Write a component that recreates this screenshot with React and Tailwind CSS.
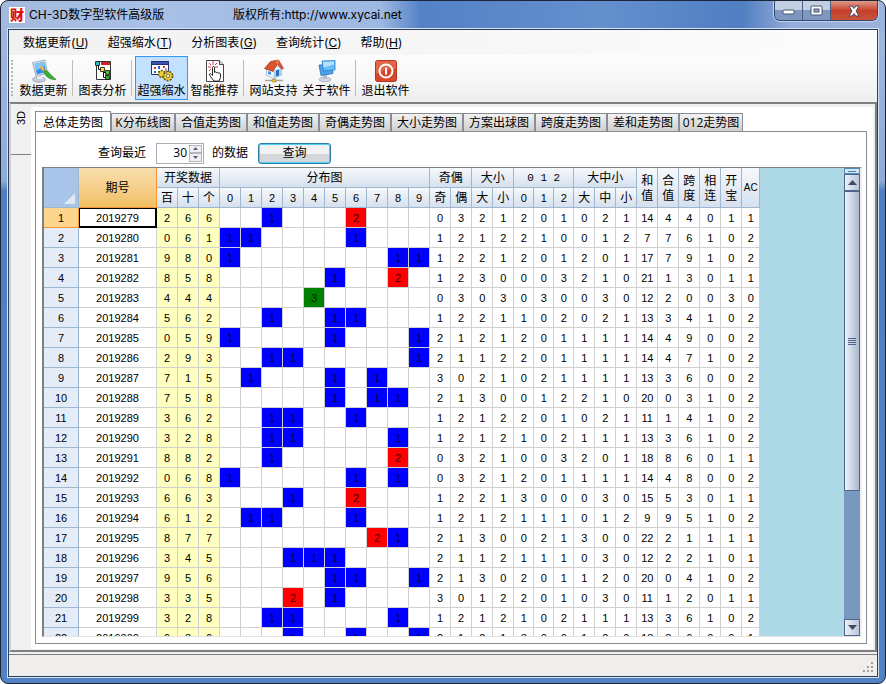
import { useState } from "react";
import clsx from "clsx";

const MENUS = [
  { label: "数据更新", hotkey: "U" },
  { label: "超强缩水", hotkey: "T" },
  { label: "分析图表", hotkey: "G" },
  { label: "查询统计", hotkey: "C" },
  { label: "帮助", hotkey: "H" },
];

const TABS = [
  "总体走势图",
  "K分布线图",
  "合值走势图",
  "和值走势图",
  "奇偶走势图",
  "大小走势图",
  "方案出球图",
  "跨度走势图",
  "差和走势图",
  "012走势图",
];

const FIRST_ISSUE = 2019279;
const DRAWS = [
  "266", "061", "980", "858", "444", "562", "059", "293", "715", "758", "362",
  "328", "882", "068", "663", "612", "877", "345", "956", "335", "328", "936",
];

const DIGITS = [0, 1, 2, 3, 4, 5, 6, 7, 8, 9];

const HIT_COLORS = {
  1: "bg-[#0000ff]",
  2: "bg-[#ff0000]",
  3: "bg-[#008000]",
};

// all the statistic columns for one draw, from 奇 to AC
function getStats(nums) {
  const count = (fn) => nums.filter(fn).length;
  const [a, b, c] = nums;
  const sum = a + b + c;
  const diffs = [Math.abs(a - b), Math.abs(b - c), Math.abs(a - c)];
  const distinct = new Set(nums).size;

  return [
    count((n) => n % 2 === 1),
    count((n) => n % 2 === 0),
    count((n) => n >= 5),
    count((n) => n < 5),
    count((n) => n % 3 === 0),
    count((n) => n % 3 === 1),
    count((n) => n % 3 === 2),
    count((n) => n >= 7),
    count((n) => n >= 3 && n <= 6),
    count((n) => n <= 2),
    sum,
    sum % 10,
    Math.max(...nums) - Math.min(...nums),
    diffs.includes(1) ? 1 : 0,
    distinct === 3 ? 0 : distinct === 2 ? 1 : 3,
    new Set(diffs).size - 1,
  ];
}

/* ICONS */

function UpdateIcon() {
  return (
    <svg width="26" height="24" viewBox="0 0 26 24">
      <ellipse cx="8" cy="20.500" rx="6.500" ry="2.800" fill="#c3cbd9" stroke="#8792a8" strokeWidth=".6" />
      <path d="M6 16l5 0 1 4-6 0z" fill="#e6ebf2" />
      <path d="M1.500 3.500l12.500-2.500 2.500 13-11.500 3.500z" fill="#d5dce8" stroke="#8a9ab5" strokeWidth=".7" />
      <path d="M3.500 5l9.500-2 2 10-9 2.500z" fill="#2f8fe6" />
      <path d="M3.500 5l9.500-2 .6 4-9 5z" fill="#7cc6fa" />
      <path d="M8 7.500l3-.5 4 5-2 1.500z" fill="#f0b640" />
      <path d="M13 11.500c2.500-.5 5 1.500 6 3.500l6 5.500c-5 .5-10-2-12-7z" fill="#3fae35" stroke="#1f7a24" strokeWidth=".6" />
    </svg>
  );
}

function ChartIcon() {
  return (
    <svg width="24" height="24" viewBox="0 0 24 24">
      <path d="M5.500 2.500h14v18h-14z" fill="#fff" stroke="#333" />
      <path d="M10 3h9v3h-9z" fill="#d3202c" />
      <path d="M7.500 6v4.500h3M12.500 11v7.500h3M13 13.500h3" fill="none" stroke="#111" />
      <path d="M4.500 2.500h4v4h-4z" fill="#39b5bd" stroke="#111" strokeWidth=".8" />
      <path d="M9.500 8.500h4v4h-4z" fill="#f1df3c" stroke="#111" strokeWidth=".8" />
      <path d="M14.500 11.500h4v4h-4z" fill="#4fbf3f" stroke="#111" strokeWidth=".8" />
      <path d="M14.500 16.500h4v4h-4z" fill="#3e9e36" stroke="#111" strokeWidth=".8" />
    </svg>
  );
}

function ShrinkIcon() {
  return (
    <svg width="26" height="24" viewBox="0 0 26 24">
      <path d="M2.500 2.500h17v13h-17z" fill="#fff" stroke="#26356e" />
      <path d="M2.500 2.500h17v3h-17z" fill="#3c55a8" stroke="#26356e" />
      <path d="M5 8h2v2h-2zM14 7h2v2h-2z" fill="#e03535" />
      <path d="M9 7h2v3h-2zM5 12h2v2h-2z" fill="#3455d8" />
      <path d="M9 12h2v2h-2z" fill="#3caa3c" />
      <circle cx="13" cy="15" r="3.500" fill="#e9cf3a" stroke="#6b5a10" strokeDasharray="2 1" strokeWidth="1.400" />
      <circle cx="19" cy="17" r="4.600" fill="#ecd23c" stroke="#6b5a10" strokeDasharray="2 1.200" strokeWidth="1.800" />
      <circle cx="19" cy="17" r="1.600" fill="#fff" stroke="#6b5a10" strokeWidth=".8" />
      <path d="M17 9v6" stroke="#8c8c8c" strokeWidth="1.500" />
    </svg>
  );
}

function RecommendIcon() {
  return (
    <svg width="24" height="24" viewBox="0 0 24 24">
      <path d="M3.500 1.500h13l4 4v17h-17z" fill="#fff" stroke="#444" />
      <path d="M16.500 1.500v4h4" fill="#ddd" stroke="#444" />
      <path d="M10 2v4M5 8h3M12 8h3M6 4l2 2M14 4l-2 2M6 12l2-2" stroke="#e23a4a" />
      <path d="M9.500 8.500c0-1.500 2-1.500 2 0v5c.5-1 2-.8 2 .3.500-.8 2-.5 2 .5.500-.6 2-.3 2 .8v3.500l-1.500 3.500h-5l-4.500-6c-.6-1.300 1-2 1.800-.8l1.200 1.200z" fill="#fff" stroke="#222" />
    </svg>
  );
}

function HomeIcon() {
  return (
    <svg width="24" height="24" viewBox="0 0 24 24">
      <path d="M4.500 10l5-5 10 4v7l-8 3.500-7-3z" fill="#f3f8fd" stroke="#7fa3cc" strokeWidth=".7" />
      <path d="M11.500 12l8-3v7l-8 3.500z" fill="#a9d0f5" />
      <path d="M2.500 9.500l6-7 8-1.500 5 8.500-2 .5-4-5-4.500 7.500z" fill="#d9542c" stroke="#a33518" strokeWidth=".7" />
      <path d="M14.500 1.500l2-.5v3l-2 1z" fill="#ee8557" />
      <path d="M14 11.500l3-1v6l-3 1z" fill="#2c6fb8" />
      <path d="M6 12l3 1v3l-3-1z" fill="#4b93dd" />
      <path d="M3 21.500h18M12 19v3" stroke="#a5a5a5" strokeWidth="1.500" />
      <path d="M10 20.500h4v2.500h-4z" fill="#ecc73a" stroke="#9a7a12" strokeWidth=".5" />
    </svg>
  );
}

function AboutIcon() {
  return (
    <svg width="24" height="24" viewBox="0 0 24 24">
      <ellipse cx="10" cy="20.500" rx="6" ry="2.300" fill="#d3d9e3" stroke="#8e9ab0" strokeWidth=".6" />
      <path d="M8 15h4v5h-4z" fill="#b6c0d0" />
      <path d="M4 6l13-.5 1 9-12 2z" fill="#4ba1ea" stroke="#2a72bd" strokeWidth=".8" />
      <path d="M7 2l13-.5v9.500l-11.500 1z" fill="#69bdf7" stroke="#2a7fce" strokeWidth=".8" />
      <path d="M8 3l11-.5v3l-10.500 3z" fill="#b4e2fd" />
    </svg>
  );
}

function ExitIcon() {
  return (
    <svg width="24" height="24" viewBox="0 0 24 24">
      <rect x="1.500" y="1.500" width="21" height="21" rx="2" fill="#d9472b" stroke="#b5351d" />
      <path d="M2 2h20v8c-7 0-13 1-20 5z" fill="#ea7a5c" opacity=".6" />
      <circle cx="12" cy="12" r="6.500" fill="none" stroke="#fff" strokeWidth="2" />
      <path d="M12 8.500v7" stroke="#fff" strokeWidth="2" />
    </svg>
  );
}

const TOOLS = [
  { label: "数据更新", Icon: UpdateIcon, line: true },
  { label: "图表分析", Icon: ChartIcon, line: true },
  { label: "超强缩水", Icon: ShrinkIcon, active: true },
  { label: "智能推荐", Icon: RecommendIcon, line: true },
  { label: "网站支持", Icon: HomeIcon },
  { label: "关于软件", Icon: AboutIcon, line: true },
  { label: "退出软件", Icon: ExitIcon },
];

function TitleBar() {
  return (
    <header className="flex h-7 shrink-0 items-start justify-between">
      <div className="flex h-7 items-center pl-px font-[Inter,'Noto_Sans_CJK_SC',sans-serif]">
        <span className="flex h-4 w-4 items-center justify-center bg-white text-[14px] leading-4 font-black text-[#e01010]">
          财
        </span>
        <h1 className="ml-1 w-[204px] text-[12px] leading-4 whitespace-nowrap">CH-3D数字型软件高级版</h1>
        <span className="text-[12px] leading-4">版权所有:http://www.xycai.net</span>
      </div>

      <div className="flex h-5 overflow-hidden rounded-b-md border border-t-0 border-[#33466b] shadow-[0_0_0_1px_#c4d3ec]">
        <button
          aria-label="最小化"
          className="flex w-7 items-center justify-center border-r border-[#4a5c80] bg-linear-to-b from-[#c3cfe3] from-50% to-[#7d97c0] to-50%"
        >
          <svg width="13" height="13" viewBox="0 0 13 13">
            <rect x="1" y="6" width="11" height="4" rx="1" fill="#fff" stroke="#4a5570" />
          </svg>
        </button>
        <button
          aria-label="最大化"
          className="flex w-7 items-center justify-center border-r border-[#4a5c80] bg-linear-to-b from-[#c3cfe3] from-50% to-[#7d97c0] to-50%"
        >
          <svg width="13" height="11" viewBox="0 0 13 11">
            <rect x="1" y="1" width="11" height="9" rx="1" fill="#fff" stroke="#4a5570" />
            <rect x="4" y="4" width="5" height="3" fill="#8fa3c6" stroke="#4a5570" />
          </svg>
        </button>
        <button
          aria-label="关闭"
          className="flex w-[46px] items-center justify-center bg-linear-to-b from-[#dd9a8c] via-[#c4402c] via-50% to-[#c9523a]"
        >
          <svg width="14" height="12" viewBox="0 0 14 12">
            <path d="M2 1h3l2 2.500 2-2.500h3l-3 5 3 5h-3l-2-2.500-2 2.500h-3l3-5z" fill="#fff" stroke="#4a4a5e" />
          </svg>
        </button>
      </div>
    </header>
  );
}

function MenuBar() {
  return (
    <nav className="flex h-[25px] shrink-0 items-center gap-[19px] bg-linear-to-r from-[#f1f1f1] to-[#fcfcfc] pl-[14px] font-[Inter,'Noto_Sans_CJK_SC',sans-serif]">
      {MENUS.map((m) => (
        <button key={m.label} className="text-[12px] leading-4">
          {m.label}(<span className="underline">{m.hotkey}</span>)
        </button>
      ))}
    </nav>
  );
}

function Toolbar() {
  return (
    <div className="flex h-[47px] shrink-0 items-start bg-linear-to-b from-[#fdfdfd] via-[#f7f7f7] to-[#eeeeee] pt-px pl-[2px]">
      <div className="mt-1 mr-1 h-9 w-0 border-l-2 border-dotted border-[#b8b8b8]" />
      {TOOLS.map(({ label, Icon, active, line }) => (
        <div key={label} className="flex items-center">
          <button
            className={clsx(
              "flex h-11 w-[53px] flex-col items-center border pt-[2px] text-[12px] leading-4",
              active ? "border-[#3399ff] bg-[#c2e0ff]" : "border-transparent"
            )}
          >
            <Icon />
            <span className="whitespace-nowrap">{label}</span>
          </button>
          {line && <div className="mr-[3px] ml-[2px] h-9 w-px bg-[#bdbdbd]" />}
        </div>
      ))}
    </div>
  );
}

function QueryRow({ value, onChange }) {
  const step = (n) => onChange(String(Math.max(1, Number(value) + n)));

  return (
    <div className="flex h-[35px] shrink-0 items-center pt-[7px] pl-14 text-[12px] leading-4">
      <label htmlFor="recent" className="mr-[10px]">查询最近</label>
      <div className="flex h-[21px] w-12 border border-[#abadb3] bg-white p-px">
        <input
          id="recent"
          value={value}
          onChange={(e) => onChange(e.target.value)}
          className="w-[29px] min-w-0 bg-transparent text-right text-[12px] leading-4 outline-none"
        />
        <div className="ml-[2px] flex flex-1 flex-col">
          <button
            aria-label="增加"
            onClick={() => step(1)}
            className="flex flex-1 items-center justify-center border border-[#b5b5b5] bg-[#f0f0f0]"
          >
            <svg width="5" height="3" viewBox="0 0 5 3"><path d="M0 3l2.500-3 2.500 3z" fill="#4a608c" /></svg>
          </button>
          <button
            aria-label="减少"
            onClick={() => step(-1)}
            className="flex flex-1 items-center justify-center border border-[#b5b5b5] bg-[#f0f0f0]"
          >
            <svg width="5" height="3" viewBox="0 0 5 3"><path d="M0 0l2.500 3 2.500-3z" fill="#4a608c" /></svg>
          </button>
        </div>
      </div>
      <span className="ml-2">的数据</span>
      <button className="ml-[10px] h-[21px] w-[73px] rounded-[3px] border border-[#2c7da8] bg-linear-to-b from-[#f2f2f2] from-50% to-[#d4d8da] to-50% shadow-[inset_0_0_0_1px_#4fd0f0]">
        查询
      </button>
    </div>
  );
}

function HeadCell({ children, className, ...rest }) {
  return (
    <th
      {...rest}
      className={clsx(
        "overflow-hidden border-r border-b border-[#9eb6ce] bg-linear-to-b from-[#f6f9fc] to-[#d6e0ee] p-0 text-center font-normal whitespace-nowrap",
        className
      )}
    >
      {children}
    </th>
  );
}

function TrendTable() {
  return (
    <table className="w-[716px] shrink-0 table-fixed border-separate border-spacing-0 self-start bg-white text-[12px] leading-4">
      <colgroup>
        <col className="w-[35px]" />
        <col className="w-[78px]" />
        <col span={17} className="w-[21px]" />
        <col span={3} className="w-[20px]" />
        <col span={8} className="w-[21px]" />
        <col className="w-[18px]" />
      </colgroup>
      <thead>
        <tr className="h-5">
          <th rowSpan={2} aria-label="全选" className="border-r border-b border-[#9eb6ce] bg-[#a9c4e9] p-0 align-bottom">
            <svg className="ml-auto" width="14" height="14" viewBox="0 0 14 14">
              <path d="M11 0v11h-11z" fill="#dfe9f6" />
            </svg>
          </th>
          <th
            rowSpan={2}
            className="border-r border-b border-[#f29536] bg-linear-to-b from-[#f9deae] to-[#f2bf62] p-0 font-normal"
          >
            期号
          </th>
          <HeadCell colSpan={3}>开奖数据</HeadCell>
          <HeadCell colSpan={10}>分布图</HeadCell>
          <HeadCell colSpan={2}>奇偶</HeadCell>
          <HeadCell colSpan={2}>大小</HeadCell>
          <HeadCell colSpan={3} className="font-['Liberation_Mono',monospace] text-[11px]">0 1 2</HeadCell>
          <HeadCell colSpan={3}>大中小</HeadCell>
          {["和值", "合值", "跨度", "相连", "开宝"].map((t) => (
            <HeadCell key={t} rowSpan={2} className="leading-[15px]">
              {t[0]}
              <br />
              {t[1]}
            </HeadCell>
          ))}
          <HeadCell rowSpan={2} className="font-['Liberation_Sans',sans-serif] text-[10px]">AC</HeadCell>
        </tr>
        <tr className="h-5">
          {["百", "十", "个"].map((t) => (
            <HeadCell key={t}>{t}</HeadCell>
          ))}
          {DIGITS.map((d) => (
            <HeadCell key={d} className="font-['Liberation_Sans',sans-serif] text-[11px]">{d}</HeadCell>
          ))}
          {["奇", "偶", "大", "小"].map((t) => (
            <HeadCell key={t}>{t}</HeadCell>
          ))}
          {[0, 1, 2].map((d) => (
            <HeadCell key={d} className="font-['Liberation_Sans',sans-serif] text-[11px]">{d}</HeadCell>
          ))}
          {["大", "中", "小"].map((t) => (
            <HeadCell key={t}>{t}</HeadCell>
          ))}
        </tr>
      </thead>
      <tbody className="font-['Liberation_Sans',sans-serif] text-[11px]">
        {DRAWS.map((draw, i) => {
          const nums = draw.split("").map(Number);
          return (
            <tr key={i} className="h-5 text-center">
              <th
                className={clsx(
                  "border-r border-b p-0 font-normal",
                  i === 0 ? "border-[#f29536] bg-[#ffd58d]" : "border-[#9eb6ce] bg-[#e4ecf7]"
                )}
              >
                {i + 1}
              </th>
              <td
                className={clsx(
                  "border-r border-b p-0",
                  i === 0 ? "border-black shadow-[inset_0_0_0_1px_#000]" : "border-[#d0d0d0]"
                )}
              >
                {FIRST_ISSUE + i}
              </td>
              {nums.map((n, k) => (
                <td key={k} className="border-r border-b border-[#d0d0d0] bg-[#ffffc0] p-0">{n}</td>
              ))}
              {DIGITS.map((d) => {
                const hits = nums.filter((n) => n === d).length;
                return (
                  <td
                    key={d}
                    className={clsx("border-r border-b border-[#d0d0d0] p-0 text-black/80", HIT_COLORS[hits])}
                  >
                    {hits > 0 && hits}
                  </td>
                );
              })}
              {getStats(nums).map((n, k) => (
                <td key={k} className="border-r border-b border-[#d0d0d0] p-0">{n}</td>
              ))}
            </tr>
          );
        })}
      </tbody>
    </table>
  );
}

function ScrollBar() {
  return (
    <div className="flex w-4 shrink-0 flex-col bg-[#7898c0]">
      <div className="flex h-[6px] items-center justify-center border border-[#5a8ab8] bg-[#cfe6f5]">
        <div className="h-px w-2 bg-[#4a80b0]" />
      </div>
      <button
        aria-label="向上滚动"
        className="flex h-[17px] items-center justify-center border border-[#50648c] bg-linear-to-r from-[#eef2f8] to-[#b8c6dc]"
      >
        <svg width="9" height="5" viewBox="0 0 9 5"><path d="M0 5l4.500-5 4.500 5z" fill="#444c60" /></svg>
      </button>
      <div className="flex h-[300px] flex-col items-center justify-center gap-px border border-[#50648c] bg-linear-to-r from-[#f0f3f8] to-[#a9b8d0]">
        <div className="h-px w-2 bg-[#50648c]" />
        <div className="h-px w-2 bg-[#50648c]" />
        <div className="h-px w-2 bg-[#50648c]" />
        <div className="h-px w-2 bg-[#50648c]" />
      </div>
      <button
        aria-label="向下滚动"
        className="mt-auto flex h-[17px] items-center justify-center border border-[#50648c] bg-linear-to-r from-[#eef2f8] to-[#b8c6dc]"
      >
        <svg width="9" height="5" viewBox="0 0 9 5"><path d="M0 0l4.500 5 4.500-5z" fill="#444c60" /></svg>
      </button>
    </div>
  );
}

export default function App() {
  const [tab, setTab] = useState(TABS[0]);
  const [recent, setRecent] = useState("30");

  return (
    <div className="flex h-screen flex-col overflow-hidden rounded-lg border border-[#1c2638] bg-[linear-gradient(90deg,#a3bade_0px,#a9c1e6_150px,#9db8e2_380px,#5482c6_420px,#5d89ca_520px,#6490ce_600px,#507ec2_740px,#94add8_790px,#9bb3dc_100%),linear-gradient(180deg,#a3bade_0px,#8fabd8_180px,#4f7fc2_190px,#5382c4_100%)] bg-[size:100%_30px,100%_100%] bg-no-repeat px-[7px] pb-[6px] font-['Open_Sans','Noto_Sans_CJK_SC',sans-serif] text-black">
      <TitleBar />

      <div className="flex min-h-0 flex-1 flex-col border border-[#2b3f60] bg-[#f0f0f0] shadow-[0_0_0_1px_#d5e2f4]">
        <MenuBar />
        <Toolbar />

        {/* MAIN AREA */}
        <main className="flex min-h-0 flex-1 border-2 border-[#808080] border-l-[#d0d0d0] bg-[#f0f0f0] pt-[3px] pr-[2px] pb-px">
          <div className="w-5 shrink-0">
            <button className="flex h-12 w-full items-start justify-center border-b border-[#808080] pt-1 font-['Liberation_Sans',sans-serif] text-[11px] leading-4">
              <span className="rotate-180 [writing-mode:vertical-rl]">3D</span>
            </button>
          </div>

          <section className="flex min-w-0 flex-1 flex-col bg-white pt-1 pr-[6px] pb-[5px] pl-1">
            <div className="flex h-5 shrink-0 items-end">
              {TABS.map((t, i) => (
                <button
                  key={t}
                  onClick={() => setTab(t)}
                  className={clsx(
                    "pt-px text-[12px] leading-4 whitespace-nowrap",
                    i === 0 ? "w-[76px]" : i === 1 || i === 9 ? "w-16" : "w-[72px]",
                    tab === t
                      ? "-mb-px h-[21px] border border-b-0 border-[#898c95] bg-white"
                      : "h-[18px] border border-b-0 border-[#898c95] bg-linear-to-b from-[#f2f2f2] to-[#cfcfcf]"
                  )}
                >
                  {t}
                </button>
              ))}
            </div>

            <div className="flex min-h-0 flex-1 flex-col border border-[#898c95] pr-1 pb-[6px] pl-[6px]">
              <QueryRow value={recent} onChange={setRecent} />
              <div className="flex min-h-0 flex-1 overflow-hidden border-t border-r-2 border-b border-l-2 border-[#808080] border-r-[#f0f0f0] border-b-[#e3e3e3] bg-[#add8e6]">
                <TrendTable />
                <div className="flex-1" />
                <ScrollBar />
              </div>
            </div>
          </section>
        </main>

        {/* STATUS BAR */}
        <footer className="mt-[2px] flex h-[22px] shrink-0 items-end justify-end border-t border-[#808080] bg-[#f0eded] p-[3px]">
          <svg width="12" height="12" viewBox="0 0 12 12">
            <path
              d="M9 1h2v2h-2zM5 5h2v2h-2zM9 5h2v2h-2zM1 9h2v2h-2zM5 9h2v2h-2zM9 9h2v2h-2z"
              fill="#a0a0a0"
            />
          </svg>
        </footer>
      </div>
    </div>
  );
}
